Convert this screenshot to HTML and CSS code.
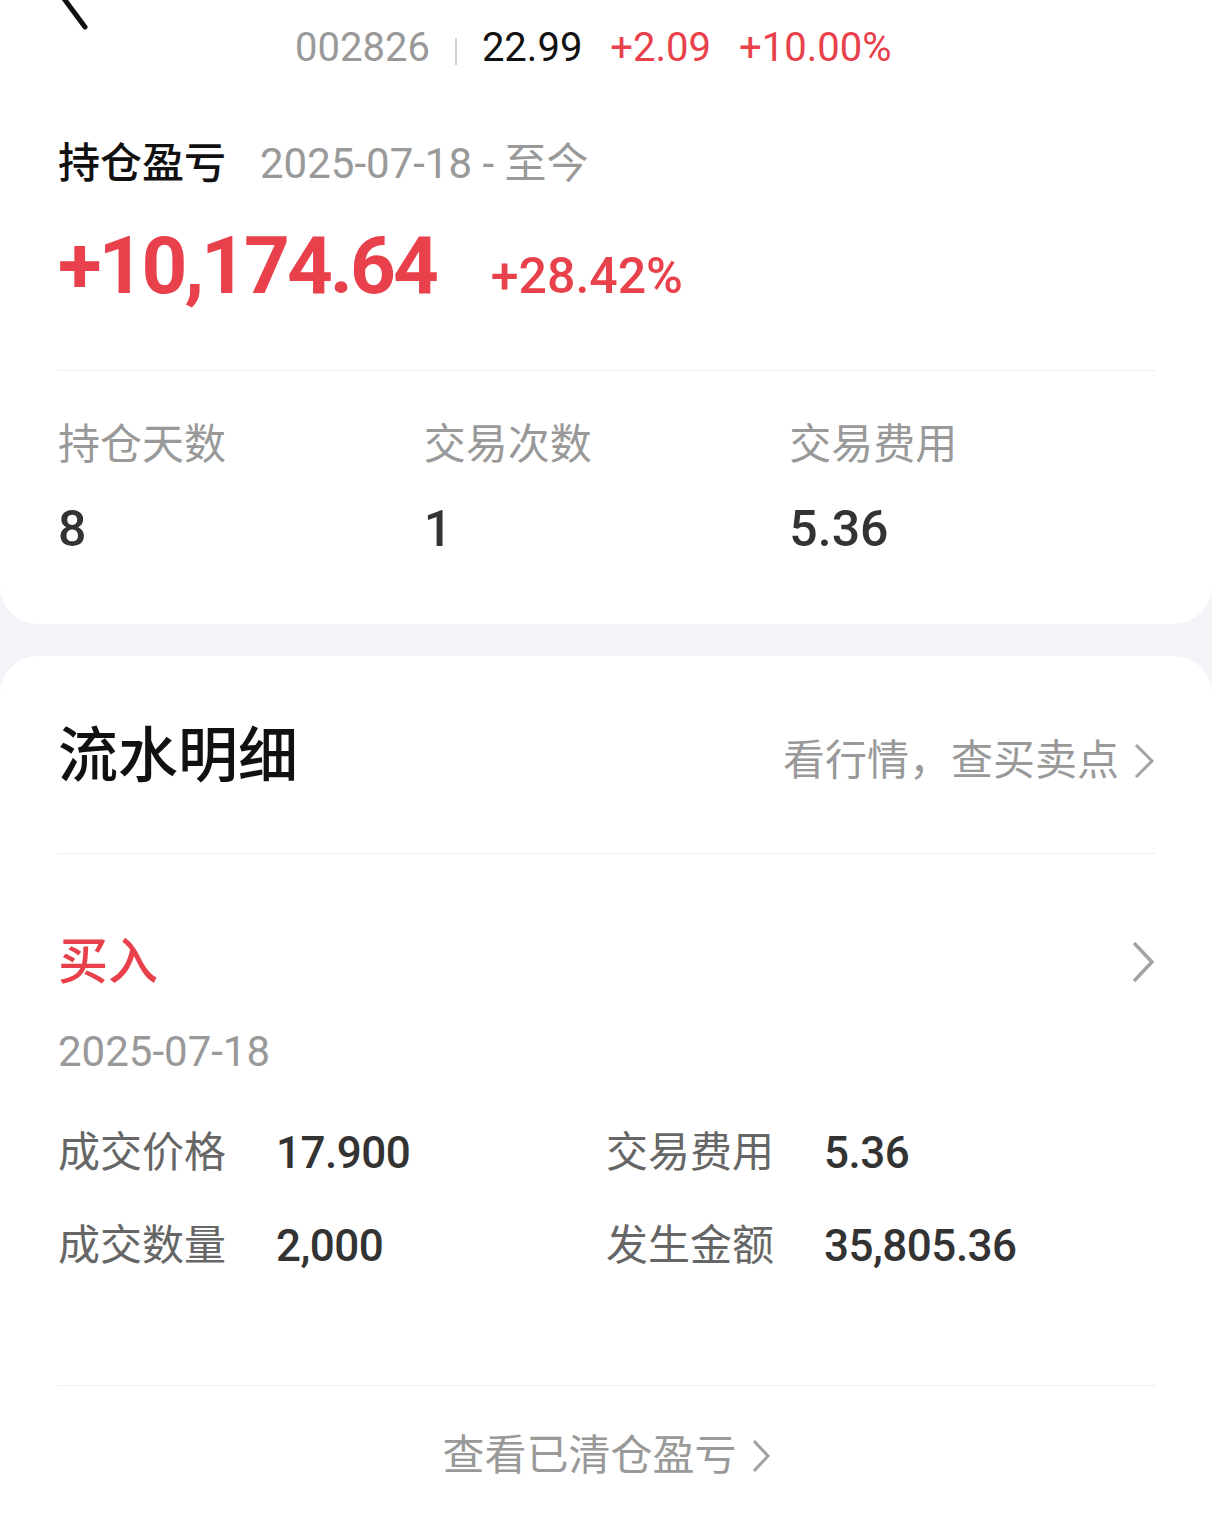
FILE: index.html
```html
<!DOCTYPE html>
<html lang="zh-CN">
<head>
<meta charset="UTF-8">
<meta name="viewport" content="width=device-width, initial-scale=1.0">
<title>持仓盈亏</title>
<link rel="stylesheet" href="styles.css">
</head>
<body>
    <div class="card top-card">
        <div class="quote">
            <svg class="back" width="36" height="34" viewBox="0 0 36 34">
                <polyline points="4,-4 27,27" fill="none" stroke="#111" stroke-width="5" stroke-linecap="round"/>
            </svg>
            <span class="code">002826</span>
            <span class="sep"></span>
            <span class="price">22.99</span>
            <span class="up">+2.09</span>
            <span class="up">+10.00%</span>
        </div>

        <div class="title-row">
            <span class="title">持仓盈亏</span>
            <span class="range">2025-07-18 - 至今</span>
        </div>

        <div class="profit-row">
            <span class="profit">+10,174.64</span>
            <span class="profit-rate">+28.42%</span>
        </div>

        <div class="stats">
            <div class="stat">
                <div class="stat-label">持仓天数</div>
                <div class="stat-value">8</div>
            </div>
            <div class="stat">
                <div class="stat-label">交易次数</div>
                <div class="stat-value">1</div>
            </div>
            <div class="stat">
                <div class="stat-label">交易费用</div>
                <div class="stat-value">5.36</div>
            </div>
        </div>
    </div>

    <div class="card flow-card">
        <div class="flow-head">
            <span class="flow-title">流水明细</span>
            <a class="flow-link" href="#">看行情，查买卖点
                <svg width="22" height="38" viewBox="0 0 22 38">
                    <polyline points="3,3 19,19 3,35" fill="none" stroke="#a3a3a3" stroke-width="3"/>
                </svg>
            </a>
        </div>

        <div class="trade">
            <div class="trade-head">
                <span class="trade-type">买入</span>
                <svg width="24" height="42" viewBox="0 0 24 42">
                    <polyline points="3,2 21,21 3,40" fill="none" stroke="#a3a3a3" stroke-width="3.5"/>
                </svg>
            </div>
            <div class="trade-date">2025-07-18</div>
            <div class="trade-grid">
                <span class="t-label">成交价格</span>
                <span class="t-value">17.900</span>
                <span class="t-label">交易费用</span>
                <span class="t-value">5.36</span>
                <span class="t-label">成交数量</span>
                <span class="t-value">2,000</span>
                <span class="t-label">发生金额</span>
                <span class="t-value">35,805.36</span>
            </div>
        </div>

        <div class="footer">
            <a class="cleared" href="#">查看已清仓盈亏
                <svg width="20" height="34" viewBox="0 0 20 34">
                    <polyline points="3,2 17,17 3,32" fill="none" stroke="#a3a3a3" stroke-width="3"/>
                </svg>
            </a>
        </div>
    </div>
</body>
</html>
```

FILE: styles.css
```css
body {
    margin: 0;
    padding: 0;
    background-color: #f3f4f8;
    font-family: Roboto, "Noto Sans CJK SC", sans-serif;
    color: #333;
}

a {
    text-decoration: none;
}

.card {
    background-color: #fff;
    padding: 0 57px 0 58px;
    box-sizing: border-box;
}

.top-card {
    height: 624px;
    border-radius: 0 0 38px 38px;
}

/* quote line */
.quote {
    position: relative;
    height: 96px;
    line-height: 96px;
    padding-left: 237px;
    display: flex;
    align-items: center;
    gap: 28px;
    font-size: 40px;
}

.back {
    position: absolute;
    left: 0;
    top: 0;
}

.code {
    color: #999;
}

.sep {
    width: 2px;
    height: 27px;
    margin: 6px -3px 0;
    background-color: #d0d0d0;
}

.price {
    color: #111;
}

.up {
    color: #e8414b;
}

/* holding profit */
.title-row {
    margin-top: 38px;
    height: 60px;
    line-height: 60px;
    display: flex;
    gap: 34px;
}

.title {
    font-size: 42px;
    font-weight: 500;
    color: #111;
}

.range {
    font-size: 42px;
    color: #999;
}

.profit-row {
    margin-top: 27px;
    height: 90px;
    line-height: 90px;
    display: flex;
    align-items: baseline;
    gap: 55px;
    color: #e8414b;
    padding-bottom: 59px;
    border-bottom: 1px solid #eee;
}

.profit {
    font-size: 80px;
    font-weight: 700;
    letter-spacing: -3px;
}

.profit-rate {
    font-size: 50px;
    font-weight: 500;
}

.stats {
    display: grid;
    grid-template-columns: repeat(3, 1fr);
    margin-top: 44px;
}

.stat-label {
    height: 60px;
    line-height: 60px;
    font-size: 42px;
    color: #999;
}

.stat-value {
    margin-top: 24px;
    height: 60px;
    line-height: 60px;
    font-size: 50px;
    font-weight: 500;
    color: #333;
}

/* flow detail */
.flow-card {
    margin-top: 32px;
    border-radius: 38px 38px 0 0;
    padding-top: 61px;
    min-height: 880px;
}

.flow-head {
    height: 80px;
    line-height: 80px;
    display: flex;
    justify-content: space-between;
    align-items: center;
    padding-bottom: 56px;
    border-bottom: 1px solid #eee;
}

.flow-title {
    font-size: 60px;
    font-weight: 500;
    color: #111;
}

.flow-link {
    display: flex;
    align-items: center;
    gap: 14px;
    font-size: 42px;
    color: #999;
    margin-top: 8px;
}

.trade {
    padding-bottom: 109px;
    border-bottom: 1px solid #eee;
}

.trade-head {
    margin-top: 78px;
    height: 60px;
    display: flex;
    justify-content: space-between;
    align-items: center;
}

.trade-type {
    font-size: 50px;
    font-weight: 500;
    color: #e8414b;
    line-height: 60px;
}

.trade-date {
    margin-top: 35px;
    height: 50px;
    line-height: 50px;
    font-size: 42px;
    color: #999;
}

.trade-grid {
    margin-top: 46px;
    display: grid;
    grid-template-columns: 218px 330px 218px 1fr;
    grid-auto-rows: 60px;
    row-gap: 33px;
    line-height: 60px;
}

.t-label {
    font-size: 42px;
    color: #666;
}

.t-value {
    font-size: 44px;
    font-weight: 500;
    color: #333;
    letter-spacing: -0.5px;
}

.footer {
    margin-top: 40px;
    display: flex;
    justify-content: center;
}

.cleared {
    display: flex;
    align-items: center;
    gap: 14px;
    height: 60px;
    line-height: 60px;
    font-size: 42px;
    color: #999;
}
```
